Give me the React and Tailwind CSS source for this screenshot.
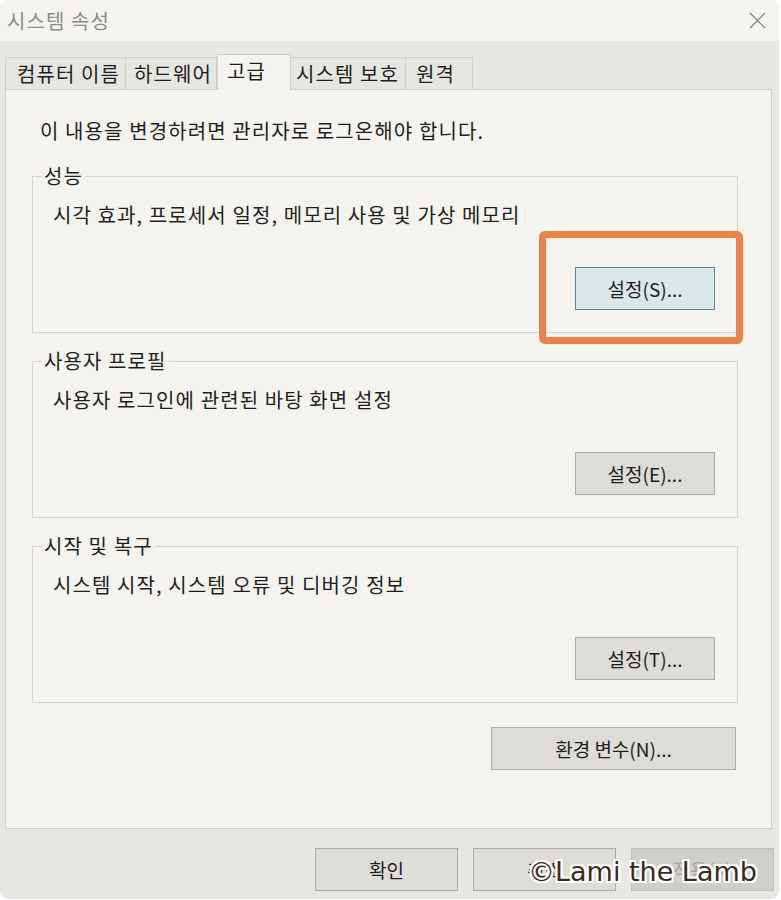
import React from 'react';

const tabs = [
  { label: '컴퓨터 이름', w: 'w-[121px] pl-[11px]' },
  { label: '하드웨어', w: 'w-[92px] pl-[8px]' },
  { label: '고급', w: 'w-[74px] pl-[9px]', active: true },
  { label: '시스템 보호', w: 'w-[116px] pl-[5px]' },
  { label: '원격', w: 'w-[68px] pl-[10px]' },
];

const txt = 'text-[20px] tracking-[1.1px] text-[#1e1e1e]';

function Btn({ children, className = '', disabled }) {
  return (
    <button
      className={`h-[43px] border text-[19px] leading-none ${
        disabled
          ? 'border-[#c2c2bd] bg-[#cfcfca] text-[#a3a3a0]'
          : 'border-[#ababa8] bg-[#dddcd7] text-[#1e1e1e]'
      } ${className}`}
    >
      {children}
    </button>
  );
}

function Group({ title, desc, button, highlight }) {
  return (
    <fieldset className="ml-[26px] w-[706px] border border-[#d5d5d0]">
      <legend className={`ml-[9px] px-[2px] h-[24px] leading-[24px] ${txt}`}>{title}</legend>
      <div className="h-[144px] flex flex-col">
        <p className={`mt-[13px] pl-[20px] h-[28px] leading-[28px] ${txt}`}>{desc}</p>
        <div className="mt-auto mb-[22px] flex justify-end pr-[22px]">
          {highlight ? (
            <button className="h-[43px] w-[140px] border-[1.5px] border-[#4d8a99] bg-[#dbe8e9] text-[19px] leading-none text-[#1e1e1e]">
              {button}
            </button>
          ) : (
            <Btn className="w-[140px]">{button}</Btn>
          )}
        </div>
      </div>
    </fieldset>
  );
}

export default function App() {
  return (
    <div className="w-[781px] h-[900px] bg-white font-['Noto_Sans_CJK_KR','Noto_Sans',sans-serif]">
      <div className="relative w-[779px] h-[899px] rounded-[8px] overflow-hidden bg-[#e8e8e3] flex flex-col">
        {/* title bar */}
        <div className="h-[41px] bg-[#f4f3ee] flex items-center justify-between pl-[7px] pr-[13px]">
          <span className="text-[20px] tracking-[1.1px] text-[#8c8c8c]">시스템 속성</span>
          <svg width="17" height="17" viewBox="0 0 17 17" stroke="#7a7a7a" strokeWidth="1.2">
            <path d="M1 1L16 16M16 1L1 16" />
          </svg>
        </div>

        {/* body */}
        <div className="flex-1 pt-[13px] pl-[5px] pr-[7px]">
          <div className="flex items-end h-[35px]">
            {tabs.map((t) =>
              t.active ? (
                <div
                  key={t.label}
                  className={`${t.w} relative z-10 -mb-px h-[36px] border border-b-0 border-[#d0d0cb] bg-[#f4f3ee] pt-[2px] leading-[28px] ${txt}`}
                >
                  {t.label}
                </div>
              ) : (
                <div
                  key={t.label}
                  className={`${t.w} h-[32px] border border-b-0 border-[#d0d0cb] -ml-px first:ml-0 bg-[#e6e6e1] leading-[32px] ${txt}`}
                >
                  {t.label}
                </div>
              )
            )}
          </div>

          {/* panel */}
          <div className="relative h-[740px] border border-[#d0d0cb] bg-[#f4f3ee] flex flex-col">
            <p className={`mt-[27px] pl-[34px] h-[28px] leading-[28px] ${txt}`}>
              이 내용을 변경하려면 관리자로 로그온해야 합니다.
            </p>
            <div className="mt-[19px] flex flex-col gap-[16px]">
              <Group title="성능" desc="시각 효과, 프로세서 일정, 메모리 사용 및 가상 메모리" button="설정(S)..." highlight />
              <Group title="사용자 프로필" desc="사용자 로그인에 관련된 바탕 화면 설정" button="설정(E)..." />
              <Group title="시작 및 복구" desc="시스템 시작, 시스템 오류 및 디버깅 정보" button="설정(T)..." />
            </div>
            <div className="mt-[24px] flex justify-end pr-[35px]">
              <Btn className="w-[245px]">환경 변수(N)...</Btn>
            </div>

            {/* annotation box */}
            <div className="absolute left-[533px] top-[141px] w-[204px] h-[113px] rounded-[6px] border-[7px] border-[#e8834b]" />
          </div>

          {/* dialog buttons */}
          <div className="mt-[19px] -mr-[2px] flex justify-end gap-[15px]">
            <Btn className="w-[143px]">확인</Btn>
            <Btn className="w-[143px]">취소</Btn>
            <Btn className="w-[143px]" disabled>적용(A)</Btn>
          </div>
        </div>

        {/* watermark */}
        <div className="absolute left-[528px] top-[853px] text-[27px] leading-[38px] text-[#3b2a1c] font-['DejaVu_Sans',sans-serif] [text-shadow:_-2px_0_#fff,2px_0_#fff,0_-2px_#fff,0_2px_#fff,-2px_-2px_#fff,2px_2px_#fff,-2px_2px_#fff,2px_-2px_#fff]">
          ©Lami the Lamb
        </div>
      </div>
    </div>
  );
}
